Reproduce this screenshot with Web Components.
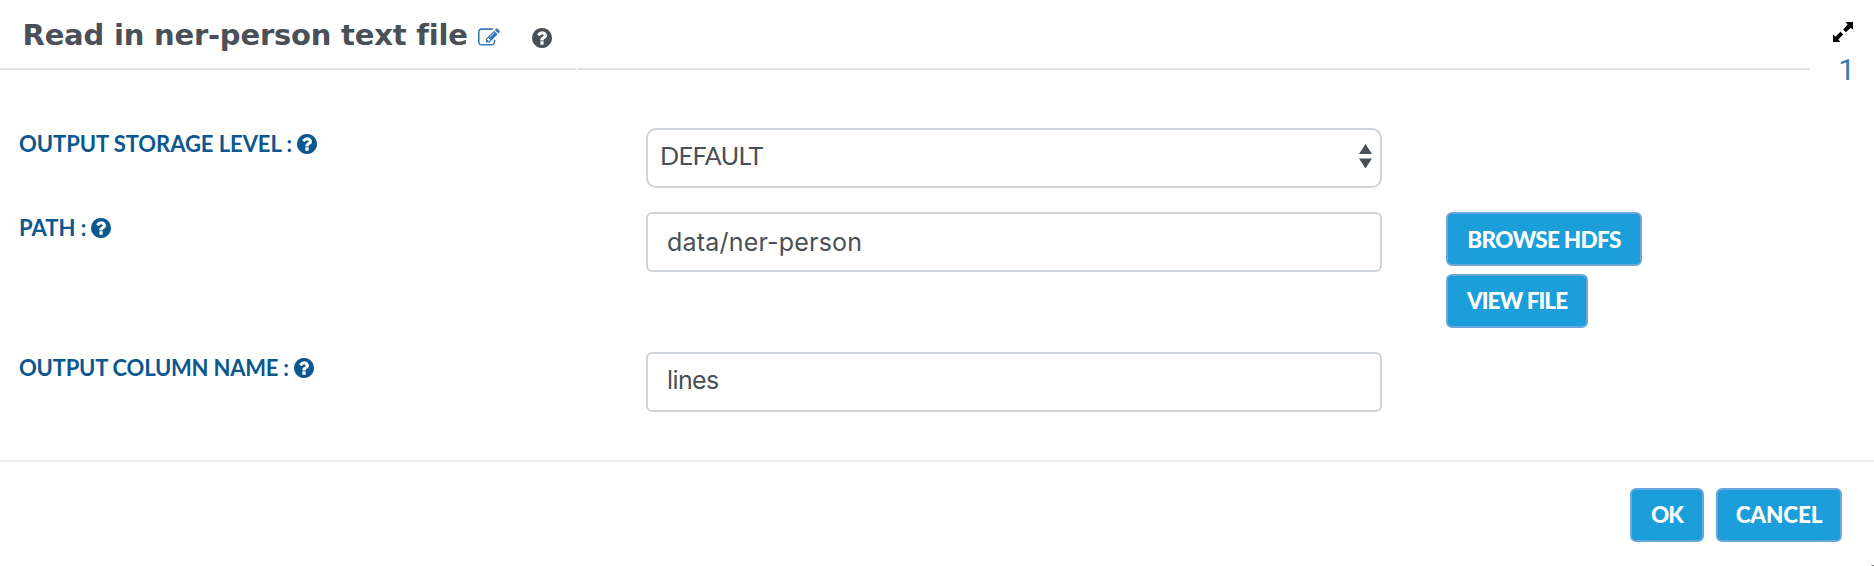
<!DOCTYPE html>
<html lang="en">
<head>
<meta charset="utf-8">
<title>Read in ner-person text file</title>
<style>
html,body{margin:0;background:#fff}
body{font-family:Lato,"Open Sans",sans-serif;color:#495057}
</style>
</head>
<body>
<node-dialog></node-dialog>
<script>
const define = (name, html) => {
  const tpl = document.createElement('template');
  tpl.innerHTML = html;
  customElements.define(name, class extends HTMLElement {
    constructor() {
      super();
      this.attachShadow({mode: 'open'}).appendChild(tpl.content.cloneNode(true));
    }
  });
};

define('help-icon', `
<style>:host{display:block;width:20px;height:20px;flex:none}svg{display:block;width:100%;height:100%}</style>
<svg viewBox="128 128 1536 1536"><path fill="currentColor" d="M1024 1376v-192q0-14-9-23t-23-9h-192q-14 0-23 9t-9 23v192q0 14 9 23t23 9h192q14 0 23-9t9-23zm256-672q0-88-55.5-163t-138.5-116-170-41q-243 0-371 213-15 24 8 42l132 100q7 6 19 6 16 0 25-12 53-68 86-92 34-24 86-24 48 0 85.5 26t37.5 59q0 38-20 61t-68 45q-63 28-115.5 86.500t-52.500 125.500v36q0 14 9 23t23 9h192q14 0 23-9t9-23q0-19 21.500-49.500t54.500-49.500q32-18 49-28.500t46-35 44.500-48 28-60.500 12.500-81zm384 192q0 209-103 385.500t-279.500 279.500-385.500 103-385.500-103-279.500-279.500-103-385.500 103-385.500 279.500-279.500 385.500-103 385.500 103 279.500 279.500 103 385.500z"/></svg>`);

define('edit-icon', `
<style>:host{display:block;width:22px;height:18px;flex:none;color:#337ab7}svg{display:block;width:100%;height:100%}</style>
<svg viewBox="0 110 1792 1450"><path fill="currentColor" d="M888 1184l116-116-152-152-116 116v56h96v96h56zm440-720q-16-16-33 1l-350 350q-17 17-1 33t33-1l350-350q17-17 1-33zm80 594v190q0 119-84.500 203.500t-203.500 84.500h-832q-119 0-203.500-84.500t-84.500-203.500v-832q0-119 84.500-203.500t203.500-84.500h832q63 0 117 25 15 7 18 23 3 17-9 29l-49 49q-14 14-32 8-23-6-45-6h-832q-66 0-113 47t-47 113v832q0 66 47 113t113 47h832q66 0 113-47t47-113v-126q0-13 9-22l64-64q15-15 35-7t20 29zm-96-738l288 288-672 672h-288v-288zm444 132l-92 92-288-288 92-92q28-28 68-28t68 28l152 152q28 28 28 68t-28 68z"/></svg>`);

define('expand-icon', `
<style>:host{display:block;width:20px;height:20px}svg{display:block}</style>
<svg width="20" height="20" viewBox="0 0 20 20"><path fill="#000" d="M12.500 0H20v7.500L17.600 5.700L12.900 10.200L10.200 7.500L14.700 2.600zM0 12.500L2.400 14.700L7.500 9.800L10.200 12.500L5.300 17.400L7.200 20H0z"/></svg>`);

define('dialog-header', `
<style>
:host{display:grid;grid-template-columns:576px 1234px 64px;height:90px}
.title,.rest{height:68px;border-bottom:2px solid #dee2e6}
.title{display:flex;align-items:flex-start;padding-left:22.5px}
h4{margin:18px 0 0;font:bold 29px/34px "DejaVu Sans",sans-serif;letter-spacing:-.2px;width:447px;white-space:nowrap}
edit-icon{margin:28px 0 0 8px}
help-icon{margin:28px 0 0 32.5px}
.rest{margin-left:1px}
.side{display:flex;flex-direction:column;align-items:flex-end;padding:22px 21px 0 0}
a{font:30px/36px Roboto,sans-serif;color:#337ab7;margin:10px -2px 0 0}
</style>
<div class="title"><h4><slot></slot></h4><edit-icon></edit-icon><help-icon></help-icon></div>
<div class="rest"></div>
<div class="side"><expand-icon></expand-icon><a>1</a></div>`);

define('form-row', `
<style>
:host{display:grid;grid-template-columns:627px 736px auto;padding-left:19px;align-items:start}
.label{display:flex;align-items:center;gap:5px;height:20px;margin-top:6px;color:#0b578f;font-weight:bold;font-size:22px;line-height:20px;letter-spacing:var(--ls,0);white-space:nowrap}
.actions{display:flex;flex-direction:column;align-items:flex-start;gap:8px;margin-left:64px}
</style>
<div class="label"><span><slot name="label"></slot></span><help-icon></help-icon></div>
<slot></slot>
<div class="actions"><slot name="action"></slot></div>`);

define('text-box', `
<style>
:host{display:block;box-sizing:border-box;height:60px;border:2px solid #ced4da;border-radius:6px;padding:0 19px;font:25px/56px Inter,sans-serif;letter-spacing:var(--ls,0)}
</style><slot></slot>`);

define('select-box', `
<style>
:host{display:flex;justify-content:space-between;box-sizing:border-box;height:60px;border:2px solid #ced4da;border-radius:10px;padding:0 8px 0 12px;font-size:25px;line-height:50px;letter-spacing:-.5px}
svg{display:block;margin-top:14px}
</style><span><slot></slot></span>
<svg width="13" height="25" viewBox="0 0 13 25"><path fill="#495057" d="M6.500 0L13 10H0zM0 14.500H13L6.500 24.500z"/></svg>`);

define('action-button', `
<style>
:host{display:flex;justify-content:center;box-sizing:border-box;width:var(--w);height:54px;border:2px solid #6ca6dc;border-radius:6px;background:#1b9ed9;color:#fff;font-weight:900;font-size:22.500px;line-height:var(--lh,50px);letter-spacing:var(--ls,0);white-space:nowrap}
</style><span><slot></slot></span>`);

define('node-dialog', `
<style>
:host{display:flex;flex-direction:column;height:566px;overflow:hidden}
.form{height:370px;padding-top:38px;box-sizing:border-box}
.storage{height:84px}.path{height:140px}
footer{display:flex;justify-content:flex-end;gap:12px;border-top:2px solid #e9ecef;padding:26px 32px 0 0;height:78px}
.corner{align-self:flex-end;width:3px;height:1px;margin-top:-1px;background:linear-gradient(90deg,#ccc,#555)}
</style>
<dialog-header>Read in ner-person text file</dialog-header>
<div class="form">
<form-row class="storage" style="--ls:-.06px"><span slot="label">OUTPUT STORAGE LEVEL :</span><select-box>DEFAULT</select-box></form-row>
<form-row class="path"><span slot="label">PATH :</span><text-box style="--ls:.2px">data/ner-person</text-box>
<action-button slot="action" style="--w:196px;--ls:-.7px;--lh:52px">BROWSE HDFS</action-button>
<action-button slot="action" style="--w:142px;--ls:-.95px">VIEW FILE</action-button></form-row>
<form-row style="--ls:-.22px"><span slot="label">OUTPUT COLUMN NAME :</span><text-box style="--ls:-.6px;line-height:52px">lines</text-box></form-row>
</div>
<footer><action-button style="--w:74px;--ls:-1px">OK</action-button><action-button style="--w:126px;--ls:-.15px">CANCEL</action-button></footer>
<div class="corner"></div>`);
</script>
</body>
</html>
